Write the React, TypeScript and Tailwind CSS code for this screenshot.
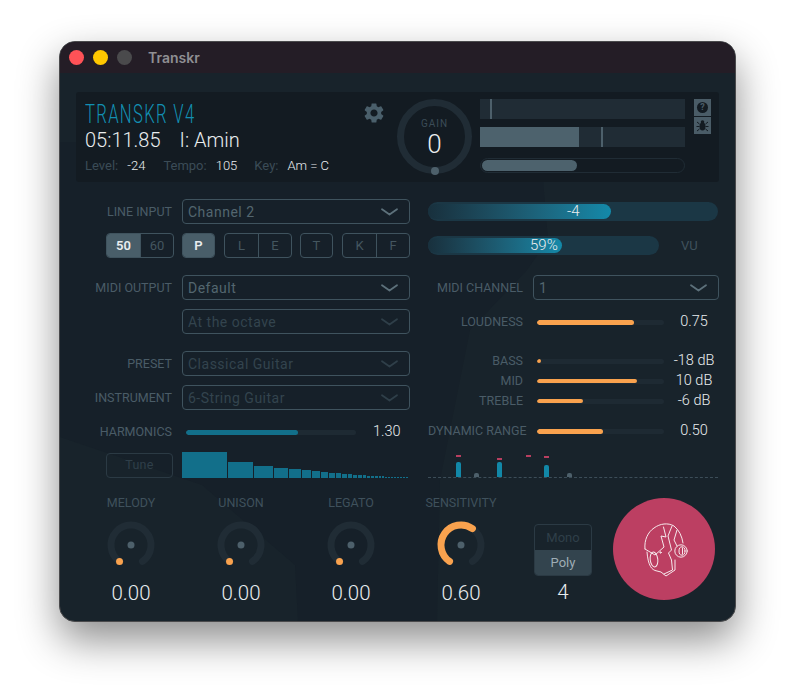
import type { ReactNode } from 'react';

const LABEL = 'whitespace-nowrap text-[12.5px] leading-none text-[#4a5c67] text-right pt-[1px]';
const NUM = "font-['Roboto'] font-light text-[#e9edef]";

const spectrum = [45, 25, 19, 14, 12, 9, 8, 7, 6, 5, 5, 4, 4, 4, 3, 3, 3, 3, 2, 2, 2, 2, 2, 2, 2, 2, 2, 2];
const spectrumH = [26, 16, 12, 10, 9, 8, 7, 6, 5, 5, 4, 4, 3, 3, 3, 2, 2, 2, 2, 2, 1, 1, 1, 1, 1, 1, 1, 1];

function polar(angle: number, r: number) {
  const a = (angle * Math.PI) / 180;
  return { x: 32 + r * Math.sin(a), y: 32 - r * Math.cos(a) };
}

function arc(from: number, to: number, r: number) {
  const s = polar(from, r);
  const e = polar(to, r);
  return `M ${s.x} ${s.y} A ${r} ${r} 0 ${to - from > 180 ? 1 : 0} 1 ${e.x} ${e.y}`;
}

function Chevron({ color }: { color: string }) {
  return (
    <svg width="17" height="8" viewBox="0 0 17 8" fill="none">
      <path d="M1 1.2 L8.5 6.5 L16 1.2" stroke={color} strokeWidth="1.8" strokeLinecap="round" strokeLinejoin="round" />
    </svg>
  );
}

function Select({ value, dim = false, className = 'w-[228px]' }: { value: string; dim?: boolean; className?: string }) {
  return (
    <div className={`flex h-[25px] shrink-0 items-center justify-between rounded-[4px] border border-[#3f535e] pl-[5px] pr-[11px] ${className}`}>
      <span className={`pt-[1px] text-[14px] tracking-[0.5px] ${dim ? 'text-[#33444e]' : 'text-[#53666f]'}`}>{value}</span>
      <Chevron color={dim ? '#2f3f49' : '#5d717b'} />
    </div>
  );
}

function Row({ label, children, className = '' }: { label?: string; children: ReactNode; className?: string }) {
  return (
    <div className={`flex items-center ${className}`}>
      <div className={`${LABEL} w-[106px] shrink-0 pr-[10px]`}>{label}</div>
      {children}
    </div>
  );
}

function Toggle({ items, active }: { items: string[]; active?: string }) {
  return (
    <div className="flex h-[25px] overflow-hidden rounded-[4px] border border-[#3f535e]">
      {items.map((item, i) => (
        <div
          key={item}
          className={`flex items-center justify-center text-[13px] ${items.length === 1 ? 'w-[31px]' : 'w-[33px]'} ${i > 0 ? 'border-l border-[#3f535e]' : ''} ${
            item === active ? 'bg-[#495e69] font-semibold text-[#e9edef]' : 'text-[#44565f]'
          }`}
        >
          {item}
        </div>
      ))}
    </div>
  );
}

function Slider({ percent, color, width, height = 4 }: { percent: number; color: string; width: number; height?: number }) {
  return (
    <div className="flex h-[5px] shrink-0 items-center overflow-hidden rounded-full bg-[#1e2a33]" style={{ width }}>
      <div className="rounded-full" style={{ width: `${percent}%`, background: color, height }} />
    </div>
  );
}

function ToneRow({ label, percent, value, thin = false, className = '' }: { label: string; percent: number; value: string; thin?: boolean; className?: string }) {
  return (
    <div className={`flex h-[20px] items-center ${className}`}>
      <div className={`${LABEL} w-[109px] shrink-0 pr-[14px]`}>{label}</div>
      <Slider percent={percent} color="#f9a24e" width={127} height={thin ? 4 : 5} />
      <div className={`${NUM} w-[60px] shrink-0 text-center text-[14.5px] leading-none`}>{value}</div>
    </div>
  );
}

function Knob({ label, value, amount = 0 }: { label: string; value: string; amount?: number }) {
  const end = -145 + amount * 290;
  const dot = polar(-145, 20);
  return (
    <div className="flex w-[110px] flex-col items-center">
      <div className="-mt-[1px] text-[12.5px] leading-[12.5px] text-[#3f515c]">{label}</div>
      <svg width="64" height="64" viewBox="0 0 64 64" fill="none" className="mt-[3px]">
        <path d={arc(-145, 145, 20)} stroke="#202c35" strokeWidth="7" strokeLinecap="round" />
        {amount > 0 && <path d={arc(-145, end, 20)} stroke="#f9a24e" strokeWidth="7" strokeLinecap="round" />}
        {amount === 0 && <circle cx={dot.x} cy={dot.y} r="3.5" fill="#f9a24e" />}
        <circle cx="32" cy="32" r="3.5" fill="#4d606b" />
      </svg>
      <div className={`${NUM} mt-[4px] text-[20.5px] leading-[24px]`}>{value}</div>
    </div>
  );
}

function HeadIcon() {
  return (
    <svg width="44" height="56" viewBox="0 0 44 56" fill="none" stroke="#f6e9ec" strokeWidth="1" strokeLinejoin="round" strokeLinecap="round" className="ml-[3px] mt-[2px]">
      <path d="M1 27 C0 18 4 10 10 6 C16 1.5 24 0.5 30 4 C35 8 38 14 39 21" />
      <path d="M1 27 L11 33 L20 25 L17 14 L22 15 L19.5 5" />
      <path d="M28 4 L24 14 L27.5 28 L24.5 31 L27.5 38 L28.5 48 L20 52" />
      <path d="M33 8 L30 18 L33 24" />
      <path d="M3 30 C3.5 36 4.5 41 6.5 44.5 C8 47 10 48.5 13 49 L17 50 L22 54 L31 48 L31 38" />
      <ellipse cx="10" cy="37.5" rx="3.8" ry="7.5" transform="rotate(-6 10 37.5)" />
      <circle cx="16.5" cy="30.5" r="0.7" />
      <circle cx="37" cy="29" r="6.2" />
      <ellipse cx="38" cy="29" rx="3" ry="4.2" />
      <path d="M38.5 26 V32" />
    </svg>
  );
}

function Header() {
  return (
    <div className="flex h-[90px] rounded-[3px] bg-[#131b22] pl-[9px] pr-[8px]">
      <div className="w-[280px] pt-[11px]">
        <div className="origin-left scale-x-[0.665] whitespace-nowrap font-['Roboto'] text-[25px] font-light leading-[24px] tracking-[2px] text-[#1290b3]">
          TRANSKR V4
        </div>
        <div className={`${NUM} mt-[1px] flex gap-[19px] text-[20px] leading-[24px]`}>
          <span>05:11.85</span>
          <span>I: Amin</span>
        </div>
        <div className="mt-[6px] flex text-[13px] leading-[16px]">
          <span className="text-[#3b4c57]">Level:</span>
          <span className={`${NUM} ml-[9px]`}>-24</span>
          <span className="ml-[18px] text-[#3b4c57]">Tempo:</span>
          <span className={`${NUM} ml-[9px]`}>105</span>
          <span className="ml-[17px] text-[#3b4c57]">Key:</span>
          <span className={`${NUM} ml-[9px]`}>Am = C</span>
        </div>
      </div>
      <svg width="24" height="24" viewBox="0 0 24 24" className="mt-[9px] shrink-0" fill="#4a5f6b">
        <path d="M19.14 12.94c.04-.3.06-.61.06-.94 0-.32-.02-.64-.07-.94l2.03-1.58a.49.49 0 0 0 .12-.61l-1.92-3.32a.488.488 0 0 0-.59-.22l-2.39.96c-.5-.38-1.03-.7-1.62-.94l-.36-2.54a.484.484 0 0 0-.48-.41h-3.84c-.24 0-.43.17-.47.41l-.36 2.54c-.59.24-1.13.57-1.62.94l-2.39-.96c-.22-.08-.47 0-.59.22L2.74 8.87c-.12.21-.08.47.12.61l2.03 1.58c-.05.3-.09.63-.09.94s.02.64.07.94l-2.03 1.58a.49.49 0 0 0-.12.61l1.92 3.32c.12.22.37.29.59.22l2.39-.96c.5.38 1.03.7 1.62.94l.36 2.54c.05.24.24.41.48.41h3.84c.24 0 .44-.17.47-.41l.36-2.54c.59-.24 1.13-.56 1.62-.94l2.39.96c.22.08.47 0 .59-.22l1.92-3.32c.12-.22.07-.47-.12-.61l-2.01-1.58zM12 15.6c-1.98 0-3.6-1.62-3.6-3.6s1.62-3.6 3.6-3.6 3.6 1.62 3.6 3.6-1.62 3.6-3.6 3.6z" />
      </svg>
      <div className="relative ml-[11px] mt-[7px] flex size-[75px] shrink-0 flex-col items-center rounded-full border-[7px] border-[#202c35] pt-[12px]">
        <span className="text-[10px] leading-[12px] tracking-[1px] text-[#3b4c57]">GAIN</span>
        <span className={`${NUM} text-[26px] leading-[28px]`}>0</span>
        <span className="absolute bottom-[-8px] size-[8px] rounded-full bg-[#4d606b]" />
      </div>
      <div className="ml-[8px] flex w-[205px] shrink-0 flex-col pt-[7px]">
        <div className="relative h-[20px] bg-[#202c35]">
          <span className="absolute left-[10px] h-full w-[2px] bg-[#4d606b]" />
        </div>
        <div className="relative mt-[8px] h-[20px] bg-[#202c35]">
          <div className="h-full w-[99px] bg-[#4d626d]" />
          <span className="absolute left-[121px] top-0 h-full w-[2px] bg-[#4d606b]" />
        </div>
        <div className="mt-[11px] flex h-[15px] items-center rounded-full border border-[#202c35] px-[1px]">
          <div className="h-[11px] w-[95px] rounded-full bg-[#4d626d]" />
        </div>
      </div>
      <div className="ml-[9px] flex flex-col gap-[1px] pt-[7px]">
        <div className="flex size-[17px] items-center justify-center bg-[#4a5c67]">
          <span className="flex size-[11px] items-center justify-center rounded-full bg-[#131b22] text-[9px] font-bold leading-none text-[#4a5c67]">?</span>
        </div>
        <div className="flex size-[17px] items-center justify-center bg-[#4a5c67]">
          <svg width="13" height="13" viewBox="0 0 13 13" fill="#131b22" stroke="#131b22" strokeWidth="1">
            <ellipse cx="6.5" cy="7.5" rx="3" ry="4" stroke="none" />
            <circle cx="6.5" cy="3" r="1.8" stroke="none" />
            <path d="M1 3 L3.5 5 M12 3 L9.5 5 M0.5 7.5 H3.5 M12.5 7.5 H9.5 M1 12 L3.5 10 M12 12 L9.5 10" fill="none" />
          </svg>
        </div>
      </div>
    </div>
  );
}

function TealBar({ percent, width, label, labelAt }: { percent: number; width: number; label: string; labelAt: number }) {
  return (
    <div className="relative flex h-[19px] items-center rounded-full bg-[#1b3745]" style={{ width }}>
      <div className="h-[15px] rounded-full bg-gradient-to-r from-[#18303d] to-[#1389a9]" style={{ width: `${percent}%` }} />
      <span className={`${NUM} absolute text-[15px] leading-none`} style={{ left: labelAt }}>{label}</span>
    </div>
  );
}

function LeftColumn() {
  return (
    <div className="w-[334px] shrink-0">
      <Row label="LINE INPUT"><Select value="Channel 2" /></Row>
      <div className="mt-[9px] flex">
        <div className="ml-[30px] mr-[8px]"><Toggle items={['50', '60']} active="50" /></div>
        <Toggle items={['P']} active="P" />
        <div className="ml-[9px]"><Toggle items={['L', 'E']} /></div>
        <div className="ml-[8px]"><Toggle items={['T']} /></div>
        <div className="ml-[9px]"><Toggle items={['K', 'F']} /></div>
      </div>
      <Row label="MIDI OUTPUT" className="mt-[17px]"><Select value="Default" /></Row>
      <Row className="mt-[9px]"><Select value="At the octave" dim /></Row>
      <Row label="PRESET" className="mt-[17px]"><Select value="Classical Guitar" dim /></Row>
      <Row label="INSTRUMENT" className="mt-[9px]"><Select value="6-String Guitar" dim /></Row>
      <Row label="HARMONICS" className="mt-[12px] h-[20px]">
        <div className="ml-[4px]"><Slider percent={66} color="#126f8a" width={170} height={5} /></div>
        <div className={`${NUM} ml-[17px] text-[14.5px] leading-none`}>1.30</div>
      </Row>
      <div className="mt-[10px] flex items-end">
        <div className="ml-[30px] mr-[9px] flex h-[25px] w-[67px] items-center justify-center rounded-[4px] border border-[#2b3a44] text-[12.5px] tracking-[0.3px] text-[#2f3f49]">
          Tune
        </div>
        <div className="flex w-[228px] items-end gap-[1px]">
          {spectrum.map((w, i) => (
            <div key={i} className="bg-[#126f8a]" style={{ width: w, height: spectrumH[i] }} />
          ))}
        </div>
      </div>
    </div>
  );
}

function MiniMeter() {
  const bars = [
    { left: 28, h: 15, color: '#1288a8', peak: 20 },
    { left: 46, h: 4, color: '#4d606b' },
    { left: 69, h: 15, color: '#1288a8', peak: 17 },
    { left: 98, h: 0, color: '#1288a8', peak: 20 },
    { left: 116, h: 12, color: '#1288a8', peak: 19 },
    { left: 139, h: 4, color: '#4d606b' },
  ];
  return (
    <div className="relative mt-[9px] h-[28px] w-[290px] border-b border-dashed border-[#3c4d58]">
      {bars.map((bar) => (
        <div key={bar.left}>
          <span className="absolute bottom-0 w-[5px] rounded-t-[2px]" style={{ left: bar.left, height: bar.h, background: bar.color }} />
          {bar.peak && <span className="absolute h-[2px] w-[5px] bg-[#b83f60]" style={{ left: bar.left, bottom: bar.peak }} />}
        </div>
      ))}
    </div>
  );
}

function RightColumn() {
  return (
    <div className="ml-[18px] w-[291px] shrink-0 pt-[3px]">
      <TealBar percent={63} width={290} label="-4" labelAt={139} />
      <div className="mt-[15px] flex items-center">
        <TealBar percent={58} width={231} label="59%" labelAt={102} />
        <span className="ml-[22px] text-[13px] leading-none text-[#3f515c]">VU</span>
      </div>
      <div className="mt-[20px] flex items-center">
        <div className={`${LABEL} w-[105px] pr-[10px]`}>MIDI CHANNEL</div>
        <Select value="1" className="w-[186px]" />
      </div>
      <ToneRow label="LOUDNESS" percent={76} value="0.75" className="mt-[12px]" />
      <ToneRow label="BASS" percent={3} value="-18 dB" thin className="mt-[19px]" />
      <ToneRow label="MID" percent={79} value="10 dB" thin />
      <ToneRow label="TREBLE" percent={36} value="-6 dB" thin />
      <ToneRow label="DYNAMIC RANGE" percent={52} value="0.50" className="mt-[10px]" />
      <MiniMeter />
    </div>
  );
}

function BottomRow() {
  return (
    <div className="mt-[20px] flex items-start">
      <Knob label="MELODY" value="0.00" />
      <Knob label="UNISON" value="0.00" />
      <Knob label="LEGATO" value="0.00" />
      <Knob label="SENSITIVITY" value="0.60" amount={0.62} />
      <div className="ml-[18px] flex w-[58px] flex-col items-center pt-[26px]">
        <div className="w-full overflow-hidden rounded-[4px] border border-[#2b3a44] text-center text-[13px] leading-[25px]">
          <div className="text-[#2f3f49]">Mono</div>
          <div className="bg-[#33444e] text-[#9fadb5]">Poly</div>
        </div>
        <div className={`${NUM} mt-[4px] text-[20.5px] leading-[24px]`}>4</div>
      </div>
      <div className="ml-[21px] flex size-[102px] shrink-0 items-center justify-center rounded-full bg-[#bc3f62]">
        <HeadIcon />
      </div>
    </div>
  );
}

export default function App() {
  return (
    <div className="h-[700px] w-[795px] overflow-hidden bg-white pl-[59px] pt-[41px] font-['Roboto',sans-serif]">
      <div className="relative h-[581px] w-[677px] overflow-hidden rounded-[16px] border border-[#4a4a4c] bg-[#18232b] shadow-[0_18px_40px_rgba(0,0,0,0.45)]">
        <svg width="677" height="581" viewBox="0 0 677 581" className="absolute inset-0" fill="#162029">
          <polygon points="0,100 480,100 488,198 467,228 410,288 380,438 377,580 238,580 235,523 142,443 0,395" />
        </svg>
        <div className="relative flex h-[31px] items-center bg-[#241d26] pl-[9px]">
          <span className="size-[15px] rounded-full bg-[#ff5257]" />
          <span className="ml-[9px] size-[15px] rounded-full bg-[#ffc800]" />
          <span className="ml-[9px] size-[15px] rounded-full bg-[#4a4a4c]" />
          <span className="ml-[16px] font-['Inter'] text-[14px] font-semibold text-[#8f8f93]">Transkr</span>
        </div>
        <div className="relative px-[16px] pt-[19px]">
          <Header />
          <div className="mt-[17px] flex">
            <LeftColumn />
            <RightColumn />
          </div>
          <BottomRow />
        </div>
      </div>
    </div>
  );
}
